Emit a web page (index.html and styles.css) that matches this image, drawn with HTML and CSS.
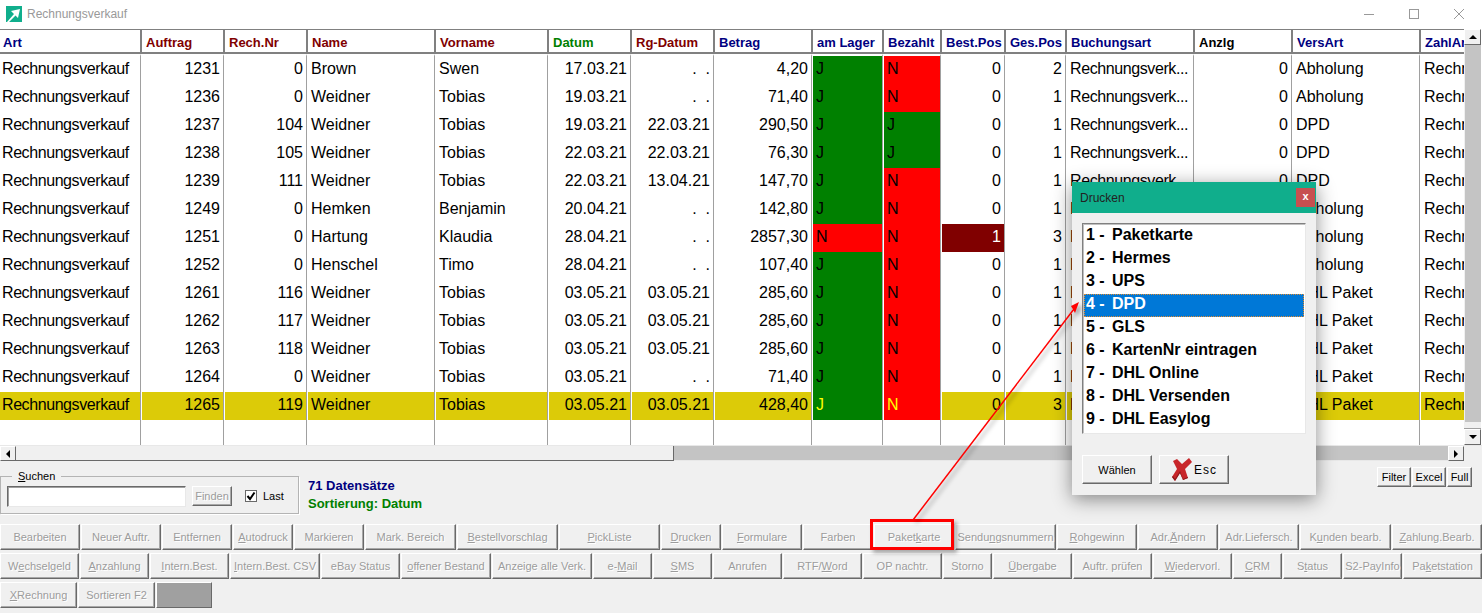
FILE: index.html
```html
<!DOCTYPE html>
<html lang="de">
<head>
    <meta charset="UTF-8">
    <title>Rechnungsverkauf</title>
    <link rel="stylesheet" href="styles.css">
</head>
<body>
<div class="window">
    <div class="titlebar">
        <svg class="app-icon" width="16" height="16" viewBox="0 0 16 16">
            <rect width="16" height="16" fill="#10ae8c"/>
            <polygon points="14,3 5,5 8,8 1,16 3,16 9.5,9.5 12,12" fill="#fff"/>
        </svg>
        <span class="title">Rechnungsverkauf</span>
        <div class="controls">
            <svg width="10" height="10" viewBox="0 0 10 10"><path d="M0 5.5H10" stroke="#999" fill="none"/></svg>
            <svg width="10" height="10" viewBox="0 0 10 10"><rect x=".5" y=".5" width="9" height="9" stroke="#999" fill="none"/></svg>
            <svg width="10" height="10" viewBox="0 0 10 10"><path d="M0 0L10 10M10 0L0 10" stroke="#999" fill="none"/></svg>
        </div>
    </div>

    <div class="grid-area">
        <div class="grid-wrap">
            <table class="grid">
                <colgroup>
                    <col class="c141"><col class="c83"><col class="c83"><col class="c128"><col class="c113"><col class="c83"><col class="c83"><col class="c98"><col class="c71"><col class="c58"><col class="c64"><col class="c61"><col class="c128"><col class="c98"><col class="c128"><col class="c100">
                </colgroup>
                <thead>
                    <tr>
                        <th class="navy">Art</th><th class="maroon">Auftrag</th><th class="maroon">Rech.Nr</th><th class="maroon">Name</th><th class="maroon">Vorname</th><th class="green">Datum</th><th class="maroon">Rg-Datum</th><th class="navy">Betrag</th><th class="navy">am Lager</th><th class="navy">Bezahlt</th><th class="navy">Best.Pos</th><th class="navy">Ges.Pos</th><th class="navy">Buchungsart</th><th>Anzlg</th><th class="navy">VersArt</th><th class="navy">ZahlArt</th>
                    </tr>
                </thead>
                <tbody>
                    <tr class="first"><td>Rechnungsverkauf</td><td class="r">1231</td><td class="r">0</td><td>Brown</td><td>Swen</td><td class="r">17.03.21</td><td class="r">.&nbsp;&nbsp;.</td><td class="r">4,20</td><td class="ok">J</td><td class="no">N</td><td class="r">0</td><td class="r">2</td><td>Rechnungsverk...</td><td class="r">0</td><td>Abholung</td><td>Rechnung</td></tr>
                    <tr><td>Rechnungsverkauf</td><td class="r">1236</td><td class="r">0</td><td>Weidner</td><td>Tobias</td><td class="r">19.03.21</td><td class="r">.&nbsp;&nbsp;.</td><td class="r">71,40</td><td class="ok">J</td><td class="no">N</td><td class="r">0</td><td class="r">1</td><td>Rechnungsverk...</td><td class="r">0</td><td>Abholung</td><td>Rechnung</td></tr>
                    <tr><td>Rechnungsverkauf</td><td class="r">1237</td><td class="r">104</td><td>Weidner</td><td>Tobias</td><td class="r">19.03.21</td><td class="r">22.03.21</td><td class="r">290,50</td><td class="ok">J</td><td class="ok">J</td><td class="r">0</td><td class="r">1</td><td>Rechnungsverk...</td><td class="r">0</td><td>DPD</td><td>Rechnung</td></tr>
                    <tr><td>Rechnungsverkauf</td><td class="r">1238</td><td class="r">105</td><td>Weidner</td><td>Tobias</td><td class="r">22.03.21</td><td class="r">22.03.21</td><td class="r">76,30</td><td class="ok">J</td><td class="ok">J</td><td class="r">0</td><td class="r">1</td><td>Rechnungsverk...</td><td class="r">0</td><td>DPD</td><td>Rechnung</td></tr>
                    <tr><td>Rechnungsverkauf</td><td class="r">1239</td><td class="r">111</td><td>Weidner</td><td>Tobias</td><td class="r">22.03.21</td><td class="r">13.04.21</td><td class="r">147,70</td><td class="ok">J</td><td class="no">N</td><td class="r">0</td><td class="r">1</td><td>Rechnungsverk...</td><td class="r">0</td><td>DPD</td><td>Rechnung</td></tr>
                    <tr><td>Rechnungsverkauf</td><td class="r">1249</td><td class="r">0</td><td>Hemken</td><td>Benjamin</td><td class="r">20.04.21</td><td class="r">.&nbsp;&nbsp;.</td><td class="r">142,80</td><td class="ok">J</td><td class="no">N</td><td class="r">0</td><td class="r">1</td><td>Rechnungsverk...</td><td class="r">0</td><td>Abholung</td><td>Rechnung</td></tr>
                    <tr><td>Rechnungsverkauf</td><td class="r">1251</td><td class="r">0</td><td>Hartung</td><td>Klaudia</td><td class="r">28.04.21</td><td class="r">.&nbsp;&nbsp;.</td><td class="r">2857,30</td><td class="no">N</td><td class="no">N</td><td class="r alert">1</td><td class="r">3</td><td>Rechnungsverk...</td><td class="r">0</td><td>Abholung</td><td>Rechnung</td></tr>
                    <tr><td>Rechnungsverkauf</td><td class="r">1252</td><td class="r">0</td><td>Henschel</td><td>Timo</td><td class="r">28.04.21</td><td class="r">.&nbsp;&nbsp;.</td><td class="r">107,40</td><td class="ok">J</td><td class="no">N</td><td class="r">0</td><td class="r">1</td><td>Rechnungsverk...</td><td class="r">0</td><td>Abholung</td><td>Rechnung</td></tr>
                    <tr><td>Rechnungsverkauf</td><td class="r">1261</td><td class="r">116</td><td>Weidner</td><td>Tobias</td><td class="r">03.05.21</td><td class="r">03.05.21</td><td class="r">285,60</td><td class="ok">J</td><td class="no">N</td><td class="r">0</td><td class="r">1</td><td>Rechnungsverk...</td><td class="r">0</td><td>DHL Paket</td><td>Rechnung</td></tr>
                    <tr><td>Rechnungsverkauf</td><td class="r">1262</td><td class="r">117</td><td>Weidner</td><td>Tobias</td><td class="r">03.05.21</td><td class="r">03.05.21</td><td class="r">285,60</td><td class="ok">J</td><td class="no">N</td><td class="r">0</td><td class="r">1</td><td>Rechnungsverk...</td><td class="r">0</td><td>DHL Paket</td><td>Rechnung</td></tr>
                    <tr><td>Rechnungsverkauf</td><td class="r">1263</td><td class="r">118</td><td>Weidner</td><td>Tobias</td><td class="r">03.05.21</td><td class="r">03.05.21</td><td class="r">285,60</td><td class="ok">J</td><td class="no">N</td><td class="r">0</td><td class="r">1</td><td>Rechnungsverk...</td><td class="r">0</td><td>DHL Paket</td><td>Rechnung</td></tr>
                    <tr><td>Rechnungsverkauf</td><td class="r">1264</td><td class="r">0</td><td>Weidner</td><td>Tobias</td><td class="r">03.05.21</td><td class="r">.&nbsp;&nbsp;.</td><td class="r">71,40</td><td class="ok">J</td><td class="no">N</td><td class="r">0</td><td class="r">1</td><td>Rechnungsverk...</td><td class="r">0</td><td>DHL Paket</td><td>Rechnung</td></tr>
                    <tr class="current"><td>Rechnungsverkauf</td><td class="r">1265</td><td class="r">119</td><td>Weidner</td><td>Tobias</td><td class="r">03.05.21</td><td class="r">03.05.21</td><td class="r">428,40</td><td class="ok">J</td><td class="no">N</td><td class="r">0</td><td class="r">3</td><td>Rechnungsverk...</td><td class="r">0</td><td>DHL Paket</td><td>Rechnung</td></tr>
                    <tr class="blank"><td></td><td></td><td></td><td></td><td></td><td></td><td></td><td></td><td></td><td></td><td></td><td></td><td></td><td></td><td></td><td></td></tr>
                </tbody>
            </table>
        </div>
        <div class="vscroll">
            <div class="sb-btn arrow-up"></div>
            <div class="v-track"></div>
            <div class="v-thumb"></div>
            <div class="sb-btn arrow-down"></div>
        </div>
    </div>

    <div class="hscroll">
        <div class="sb-btn arrow-left"></div>
        <div class="h-thumb"></div>
        <div class="h-track"></div>
        <div class="sb-btn arrow-right"></div>
    </div>

    <div class="status">
        <fieldset class="search">
            <legend><u>S</u>uchen</legend>
            <input class="search-input" type="text">
            <button class="btn find">Finden</button>
            <span class="checkbox">
                <svg width="10" height="10" viewBox="0 0 10 10"><path d="M1.5 5L4 8L8.5 1.5" stroke="#000" stroke-width="2" fill="none"/></svg>
            </span>
            <span class="last">Last</span>
        </fieldset>
        <div class="info">
            <div class="navy">71 Datensätze</div>
            <div class="green">Sortierung: Datum</div>
        </div>
        <div class="tools">
            <button class="btn active w34">Filter</button>
            <button class="btn active w34">Excel</button>
            <button class="btn active w25">Full</button>
        </div>
    </div>

    <div class="buttons">
        <div class="btn-row">
            <button class="btn w80">Bearbeiten</button>
            <button class="btn w80">Neuer Auftr.</button>
            <button class="btn w70">Entfernen</button>
            <button class="btn w60"><u>A</u>utodruck</button>
            <button class="btn w70">Markieren</button>
            <button class="btn w91">Mark. Bereich</button>
            <button class="btn w101"><u>B</u>estellvorschlag</button>
            <button class="btn w101"><u>P</u>ickListe</button>
            <button class="btn w60"><u>D</u>rucken</button>
            <button class="btn w80"><u>F</u>ormulare</button>
            <button class="btn w70">Farben</button>
            <button class="btn w80">Paket<u>k</u>arte</button>
            <button class="btn w101">Sendu<u>n</u>gsnummern</button>
            <button class="btn w80"><u>R</u>ohgewinn</button>
            <button class="btn w80">Adr.<u>Ä</u>ndern</button>
            <button class="btn w80">Adr.Liefersch.</button>
            <button class="btn w91">K<u>u</u>nden bearb.</button>
            <button class="btn w90"><u>Z</u>ahlung.Bearb.</button>
        </div>
        <div class="btn-row">
            <button class="btn w79">W<u>e</u>chselgeld</button>
            <button class="btn w69"><u>A</u>nzahlung</button>
            <button class="btn w79"><u>I</u>ntern.Best.</button>
            <button class="btn w90"><u>I</u>ntern.Best. CSV</button>
            <button class="btn w79">eBay Status</button>
            <button class="btn w90"><u>o</u>ffener Bestand</button>
            <button class="btn w100">Anzeige alle Verk.</button>
            <button class="btn w59">e-<u>M</u>ail</button>
            <button class="btn w59"><u>S</u>MS</button>
            <button class="btn w69">Anrufen</button>
            <button class="btn w79">RTF/<u>W</u>ord</button>
            <button class="btn w79">OP nachtr.</button>
            <button class="btn w49">Storno</button>
            <button class="btn w79"><u>Ü</u>bergabe</button>
            <button class="btn w79">Auftr. prüfen</button>
            <button class="btn w79"><u>W</u>iedervorl.</button>
            <button class="btn w49"><u>C</u>RM</button>
            <button class="btn w59">S<u>t</u>atus</button>
            <button class="btn w59">S2-PayInfo</button>
            <button class="btn w79">Pa<u>k</u>etstation</button>
        </div>
        <div class="btn-row">
            <button class="btn w77"><u>X</u>Rechnung</button>
            <button class="btn w77">Sortieren F2</button>
            <button class="btn w56 dark"></button>
        </div>
    </div>

    <!-- print dialog -->
    <div class="dialog">
        <div class="dialog-title">
            <span>Drucken</span>
            <span class="dialog-close">x</span>
        </div>
        <div class="dialog-body">
            <ul class="print-list">
                <li><span class="num">1 -</span>Paketkarte</li>
                <li><span class="num">2 -</span>Hermes</li>
                <li><span class="num">3 -</span>UPS</li>
                <li class="selected"><span class="num">4 -</span>DPD</li>
                <li><span class="num">5 -</span>GLS</li>
                <li><span class="num">6 -</span>KartenNr eintragen</li>
                <li><span class="num">7 -</span>DHL Online</li>
                <li><span class="num">8 -</span>DHL Versenden</li>
                <li><span class="num">9 -</span>DHL Easylog</li>
            </ul>
            <div class="dialog-buttons">
                <button class="btn active dlg-btn">Wählen</button>
                <button class="btn active dlg-btn esc">
                    <svg width="20" height="23" viewBox="0 0 20 23">
                        <polygon points="1,3 5,1 10,6 17,0 20,4 13,11 16,20 11,22 8,15 3,23 0,19 5,11" fill="#c8262a"/>
                        <polygon points="8,15 3,23 0,19 1,18 3,21 8,13 11,21 16,19 16,20 11,22" fill="#8c1a1c"/>
                    </svg>
                    <span>Esc</span>
                </button>
            </div>
        </div>
    </div>

    <!-- red annotation on top of the screenshot -->
    <div class="callout-box"></div>
    <svg class="callout" width="1482" height="613" viewBox="0 0 1482 613">
        <line x1="913" y1="520" x2="1074" y2="309" stroke="#f00" stroke-width="1.5"/>
        <polygon points="1079,302 1071,306 1075,313" fill="#f00"/>
    </svg>
</div>
</body>
</html>
```

FILE: styles.css
```css
* {
    box-sizing: border-box;
}
html, body {
    margin: 0;
    height: 100%;
    overflow: hidden;
}
body {
    font-family: "Liberation Sans", Arial, sans-serif;
    background-color: #f0f0f0;
}
.window {
    position: relative;
    width: 1482px;
    height: 613px;
    display: flex;
    flex-direction: column;
    overflow: hidden;
}
.navy { color: #000080; }
.maroon { color: #800000; }
.green { color: #008000; }

/* title bar */
.titlebar {
    height: 29px;
    flex: none;
    background-color: #fff;
    display: flex;
    align-items: center;
    padding: 0 18px 2px 6px;
}
.title {
    margin-left: 5px;
    font-size: 12px;
    color: #999;
}
.controls {
    margin-left: auto;
    display: flex;
    gap: 35px;
}
.controls svg {
    display: block;
}

/* grid */
.grid-area {
    height: 416px;
    flex: none;
    display: flex;
    background-color: #fff;
}
.grid-wrap {
    width: 1464px;
    overflow: hidden;
}
.grid {
    width: 1520px;
    table-layout: fixed;
    border-collapse: separate;
    border-spacing: 0;
    font-size: 16px;
    color: #000;
}
.c58 { width: 58px; }
.c61 { width: 61px; }
.c64 { width: 64px; }
.c71 { width: 71px; }
.c83 { width: 83px; }
.c98 { width: 98px; }
.c100 { width: 100px; }
.c113 { width: 113px; }
.c128 { width: 128px; }
.c141 { width: 141px; }
.grid th {
    height: 25px;
    padding: 2px 0 0 4px;
    text-align: left;
    font-size: 13px;
    font-weight: bold;
    white-space: nowrap;
    overflow: hidden;
    background-color: #fff;
    border-top: 1px solid #808080;
    border-bottom: 2px solid #808080;
    border-right: 1px solid #808080;
    border-left: 1px solid #808080;
}
.grid th:first-child {
    border-left: 0;
    padding-left: 3px;
}
.grid td {
    height: 28px;
    padding: 0 3px 2px;
    white-space: nowrap;
    overflow: hidden;
    border-left: 1px solid #fff;
    border-right: 1px solid #a0a0a0;
}
.grid td:first-child {
    border-left: 0;
    padding-left: 2px;
    letter-spacing: -0.42px;
}
.grid td:nth-child(13) {
    letter-spacing: -0.4px;
}
.grid tr.first td {
    height: 30px;
    border-top: 2px solid #fff;
}
.grid tr.blank td {
    height: 25px;
}
.grid td.r {
    text-align: right;
}
.grid td.ok {
    background-color: #008000;
}
.grid td.no {
    background-color: #f00;
}
.grid td.alert {
    background-color: #800000;
    color: #fff;
}
.grid tr.current td {
    background-color: #dccb08;
}
.grid tr.current td.ok {
    background-color: #008000;
    color: #ff0;
}
.grid tr.current td.no {
    background-color: #f00;
    color: #ff0;
}

/* scrollbars */
.sb-btn {
    width: 17px;
    height: 16px;
    flex: none;
    background-color: #f0f0f0;
    border: 1px solid;
    border-color: #fff #696969 #696969 #fff;
    display: flex;
    align-items: center;
    justify-content: center;
}
.sb-btn::after {
    content: "";
    border: 4px solid transparent;
}
.arrow-up::after { border-bottom-color: #000; margin-top: -4px; }
.arrow-down::after { border-top-color: #000; margin-top: 4px; }
.arrow-left::after { border-right-color: #000; margin-left: -4px; }
.arrow-right::after { border-left-color: #000; margin-left: 4px; }
.vscroll {
    width: 17px;
    flex: none;
    display: flex;
    flex-direction: column;
    background-color: #c4c4c4;
}
.v-track {
    flex: 1;
    border-left: 1px solid #f0f0f0;
}
.v-thumb {
    height: 7px;
    background-color: #f0f0f0;
    border-bottom: 1px solid #a0a0a0;
}
.hscroll {
    height: 16px;
    flex: none;
    display: flex;
    background-color: #f0f0f0;
    border-top: 1px solid #e8e8e8;
}
.hscroll .sb-btn {
    width: 16px;
    height: 15px;
}
.h-thumb {
    width: 658px;
    background-color: #f0f0f0;
    border-right: 1px solid #696969;
    border-bottom: 1px solid #696969;
}
.h-track {
    width: 774px;
    background-color: #c4c4c4;
    border-bottom: 1px solid #e8e8e8;
}

/* buttons */
.btn {
    display: block;
    flex: none;
    height: 26px;
    padding: 0;
    font-family: inherit;
    font-size: 11px;
    white-space: nowrap;
    overflow: hidden;
    color: #9c9c9c;
    text-shadow: 1px 1px 0 #fff;
    background-color: #f0f0f0;
    border: 1px solid;
    border-color: #fff #696969 #696969 #fff;
    box-shadow: inset -1px -1px 0 #a8a8a8;
}
.btn.active {
    color: #000;
    text-shadow: none;
}
.btn.dark {
    background-color: #a0a0a0;
    box-shadow: none;
}
.w25 { width: 25px; }
.w34 { width: 34px; }
.w49 { width: 49px; }
.w56 { width: 56px; }
.w59 { width: 59px; }
.w60 { width: 60px; }
.w69 { width: 69px; }
.w70 { width: 70px; }
.w77 { width: 77px; }
.w79 { width: 79px; }
.w80 { width: 80px; }
.w90 { width: 90px; }
.w91 { width: 91px; }
.w100 { width: 100px; }
.w101 { width: 101px; }

/* search and record count */
.status {
    height: 62px;
    flex: none;
    display: flex;
    align-items: flex-start;
    padding-top: 9px;
}
.search {
    width: 299px;
    height: 44px;
    margin: 0;
    padding: 0 0 0 6px;
    display: flex;
    align-items: center;
    border: 1px solid #b4b4b4;
    box-shadow: 1px 1px 0 #fff;
}
.search legend {
    margin-left: 5px;
    padding: 0 6px 0 6px;
    font-size: 11px;
    color: #000;
}
.search-input {
    width: 179px;
    height: 21px;
    margin: -3px 0 0 0;
    padding: 0;
    background-color: #fff;
    border: 1px solid;
    border-color: #696969 #e8e8e8 #e8e8e8 #696969;
    box-shadow: inset 1px 1px 0 #a0a0a0;
}
.find {
    width: 40px;
    height: 20px;
    margin: -3px 0 0 6px;
}
.checkbox {
    width: 12px;
    height: 12px;
    margin: -3px 0 0 13px;
    background-color: #fff;
    border: 1px solid #696969;
    display: flex;
    align-items: center;
    justify-content: center;
}
.last {
    margin: -3px 0 0 6px;
    font-size: 11px;
}
.info {
    margin: 7px 0 0 9px;
    font-size: 13px;
    font-weight: bold;
    line-height: 18px;
}
.tools {
    margin-left: auto;
    margin-right: 10px;
    display: flex;
    gap: 1px;
    margin-top: -3px;
}
.tools .btn {
    height: 20px;
}
.buttons {
    display: flex;
    flex-direction: column;
    gap: 3px;
    padding-top: 1px;
}
.btn-row {
    display: flex;
    gap: 1px;
}

/* print dialog */
.dialog {
    position: absolute;
    left: 1072px;
    top: 182px;
    width: 244px;
    height: 313px;
    background-color: #f0f0f0;
    box-shadow: 0 4px 18px rgba(0, 0, 0, 0.45);
}
.dialog-title {
    height: 31px;
    padding: 0 1px 0 8px;
    display: flex;
    align-items: center;
    justify-content: space-between;
    font-size: 12px;
    color: #222;
    background-color: #10ae8c;
}
.dialog-close {
    width: 19px;
    height: 19px;
    line-height: 17px;
    text-align: center;
    font-size: 11px;
    font-weight: bold;
    color: #fff;
    background-color: #c75050;
}
.dialog-body {
    padding: 10px 10px 0;
}
.print-list {
    width: 224px;
    height: 211px;
    margin: 0;
    padding: 1px;
    list-style: none;
    background-color: #fff;
    border: 1px solid;
    border-color: #808080 #e8e8e8 #e8e8e8 #808080;
    box-shadow: inset 1px 1px 0 #c0c0c0;
    font-size: 16px;
    font-weight: bold;
    color: #000;
}
.print-list li {
    height: 23px;
    line-height: 19px;
    padding-left: 2px;
    display: flex;
}
.print-list li.selected {
    color: #fff;
    background-color: #0078d7;
    outline: 1px dotted #e08a30;
    outline-offset: -1px;
}
.num {
    width: 26px;
    flex: none;
}
.dialog-buttons {
    margin-top: 21px;
    display: flex;
    gap: 7px;
}
.dlg-btn {
    width: 70px;
    height: 29px;
    color: #222;
}
.esc {
    display: flex;
    align-items: center;
    justify-content: flex-start;
    padding-left: 12px;
    gap: 2px;
    font-size: 12px;
    letter-spacing: 1px;
}

/* annotation */
.callout-box {
    position: absolute;
    left: 870px;
    top: 519px;
    width: 84px;
    height: 31px;
    border: 3px solid #f00;
    box-shadow: 3px 3px 4px rgba(0, 0, 0, 0.3);
}
.callout {
    position: absolute;
    left: 0;
    top: 0;
    pointer-events: none;
    filter: drop-shadow(3px 3px 2px rgba(0, 0, 0, 0.35));
}
```
